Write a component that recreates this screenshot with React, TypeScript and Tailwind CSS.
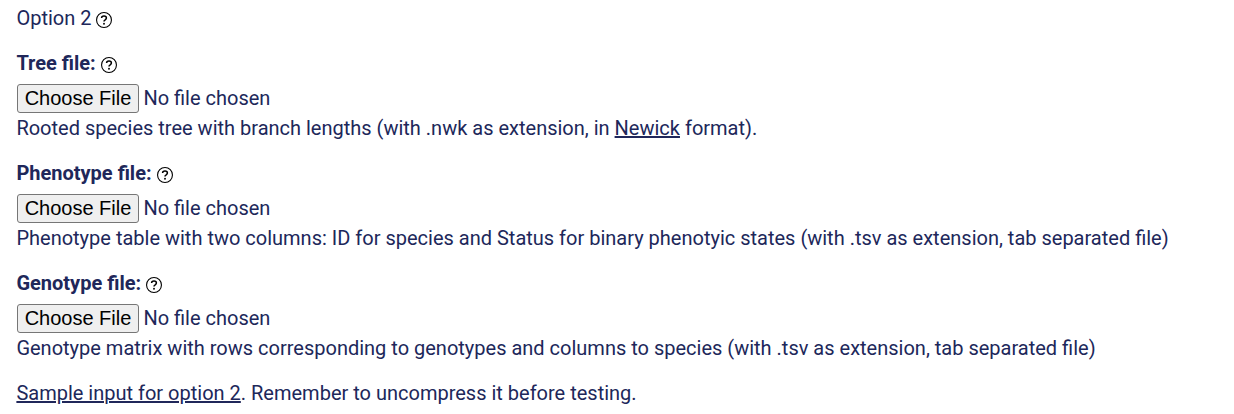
interface HelpIconProps {
  className: string;
}

interface FileFieldProps {
  label: string;
  children: React.ReactNode;
}

export default function App() {
  return (
    <form className="min-h-[414px] bg-white pl-[16.4px] pt-[3px] font-['Roboto',sans-serif] text-[20px] leading-[30px] text-[#20275a]">
      <p className="mb-[15px] flex items-center">
        Option 2
        <HelpIcon className="ml-[4.6px] mt-[3px]" />
      </p>

      <FileField label="Tree file:">
        Rooted species tree with branch lengths (with .nwk as extension, in{' '}
        <a href="#newick" className="underline">Newick</a> format).
      </FileField>
      <FileField label="Phenotype file:">
        Phenotype table with two columns: ID for species and Status for binary phenotyic states (with .tsv as extension, tab separated file)
      </FileField>
      <FileField label="Genotype file:">
        Genotype matrix with rows corresponding to genotypes and columns to species (with .tsv as extension, tab separated file)
      </FileField>

      <p>
        <a href="#sample" className="underline">Sample input for option 2</a>. Remember to uncompress it before testing.
      </p>
    </form>
  );
}

function HelpIcon({ className }: HelpIconProps) {
  return (
    <svg viewBox="0 0 16 16" fill="none" stroke="black" className={`size-4 shrink-0 ${className}`}>
      <circle cx="8" cy="8" r="7.45" strokeWidth="1.1" />
      <path d="M5.6 6C5.6 4.7 6.6 4 8 4s2.4.8 2.4 2c0 .9-.5 1.3-1.2 1.8C8.4 8.3 8 8.7 8 9.6" strokeWidth="1.5" />
      <circle cx="8" cy="11.7" r=".95" fill="black" stroke="none" />
    </svg>
  );
}

function FileField({ label, children }: FileFieldProps) {
  return (
    <div className="mb-[15px] whitespace-nowrap">
      <div className="flex h-[35px] items-start font-bold">
        {label}
        <HelpIcon className="ml-[5px] mt-[9px]" />
      </div>
      <div className="flex h-[30px] items-center">
        <button
          type="button"
          className="ml-[0.6px] h-[29px] w-[122px] rounded-[3px] border border-[#767676] bg-[#efefef] font-['Liberation_Sans',sans-serif] text-[20px] leading-[26px] text-black"
        >
          Choose File
        </button>
        <span className="ml-[4.4px]">No file chosen</span>
      </div>
      <p>{children}</p>
    </div>
  );
}
